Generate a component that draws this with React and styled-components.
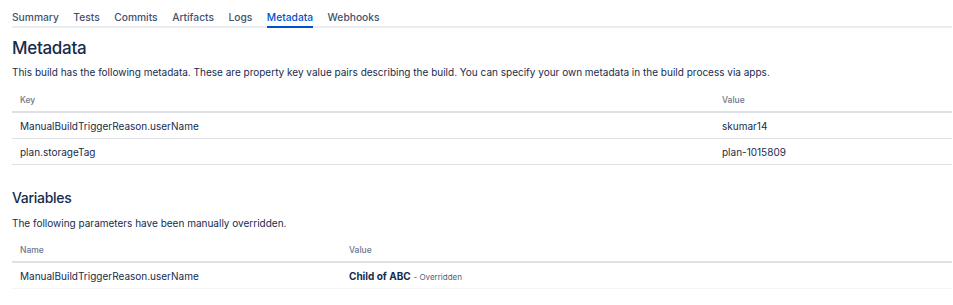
import React from "react";
import styled, { createGlobalStyle } from "styled-components";

const textColor = "#172B4D";
const subtleColor = "#6B778C";
const borderColor = "#DFE1E6";
const activeColor = "#0052CC";

const GlobalStyle = createGlobalStyle`
  body {
    margin: 0;
    background: #fff;
    font-family: Inter, "Noto Sans", sans-serif;
    color: ${textColor};
  }
`;

const Page = styled.div`
  padding: 0 1px 0 12px;
`;

// вкладки
const Tabs = styled.nav`
  display: flex;
  gap: 14.5px;
  border-bottom: 2px solid #EBECF0;
  height: 28px;
  box-sizing: border-box;
`;

const Tab = styled.div`
  font-size: 10.25px;
  font-weight: 500;
  line-height: 14px;
  padding-top: 10px;
  color: ${({ active }) => (active ? activeColor : "#42526E")};
  border-bottom: 2px solid ${({ active }) => (active ? activeColor : "transparent")};
  margin-bottom: -2px;
`;

const Title = styled.h2`
  margin: 9px 0 0;
  font-size: 17px;
  font-weight: 500;
  letter-spacing: -0.3px;
  line-height: 22px;
  color: ${textColor};
`;

const SubTitle = styled.h3`
  margin: 23px 0 0;
  font-size: 14px;
  font-weight: 500;
  letter-spacing: -0.3px;
  line-height: 20px;
  color: ${textColor};
`;

const Desc = styled.p`
  margin: ${({ top }) => top}px 0 0;
  font-size: 10px;
  line-height: 14px;
`;

const Table = styled.table`
  width: 100%;
  border-collapse: collapse;
  margin-top: ${({ top }) => top}px;
  font-size: 10px;
`;

const Th = styled.th`
  text-align: left;
  font-weight: 500;
  font-size: 8.5px;
  color: ${subtleColor};
  padding: 0 8px;
  height: 24px;
  box-sizing: border-box;
  border-bottom: 2px solid ${borderColor};
  width: ${({ w }) => w || "auto"};
`;

const Td = styled.td`
  padding: 0 8px;
  height: 25px;
  border-bottom: 1px solid ${({ light }) => (light ? "#F4F5F7" : borderColor)};
  color: ${textColor};
`;

const Strong = styled.strong`
  font-weight: 700;
`;

const Note = styled.span`
  font-size: 8px;
  color: #505F79;
`;

const tabs = ["Summary", "Tests", "Commits", "Artifacts", "Logs", "Metadata", "Webhooks"];

export default function App() {
  return (
    <Page>
      <GlobalStyle />
      <Tabs>
        {tabs.map((t) => (
          <Tab key={t} active={t === "Metadata"}>
            {t}
          </Tab>
        ))}
      </Tabs>
      <Title>Metadata</Title>
      <Desc top={6}>
        This build has the following metadata. These are property key value pairs describing the build. You can
        specify your own metadata in the build process via apps.
      </Desc>
      <Table top={9}>
        <thead>
          <tr>
            <Th w="702px">Key</Th>
            <Th>Value</Th>
          </tr>
        </thead>
        <tbody>
          <tr>
            <Td>ManualBuildTriggerReason.userName</Td>
            <Td>skumar14</Td>
          </tr>
          <tr>
            <Td>plan.storageTag</Td>
            <Td>plan-1015809</Td>
          </tr>
        </tbody>
      </Table>
      <SubTitle>Variables</SubTitle>
      <Desc top={8}>The following parameters have been manually overridden.</Desc>
      <Table top={8}>
        <thead>
          <tr>
            <Th w="35%">Name</Th>
            <Th>Value</Th>
          </tr>
        </thead>
        <tbody>
          <tr>
            <Td light>ManualBuildTriggerReason.userName</Td>
            <Td light>
              <Strong>Child of ABC</Strong> <Note>- Overridden</Note>
            </Td>
          </tr>
        </tbody>
      </Table>
    </Page>
  );
}
